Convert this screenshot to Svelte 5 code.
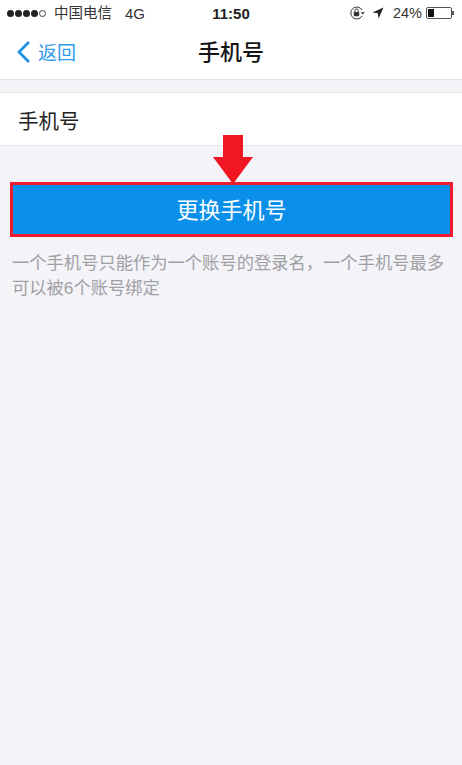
<script>
  const tip = '一个手机号只能作为一个账号的登录名，一个手机号最多可以被6个账号绑定';
</script>

<div class="screen">
  <header class="top">
    <div class="status">
      <div class="status-left">
        <span class="signal">
          <i></i><i></i><i></i><i></i><i class="off"></i>
        </span>
        <span class="carrier">中国电信</span>
        <span class="net">4G</span>
      </div>
      <span class="time">11:50</span>
      <div class="status-right">
        <svg class="lock" width="16" height="16" viewBox="0 0 16 16" fill="none">
          <path d="M13 11A6 6 0 1 1 13 5" stroke="#333" stroke-width="1" />
          <path d="M11.6 7.2h4.2l-2.1 2.4z" fill="#333" />
          <rect x="4.8" y="7" width="5.4" height="4.2" rx=".6" fill="#333" />
          <path d="M5.9 7V5.6a1.6 1.6 0 0 1 3.2 0V7" stroke="#333" stroke-width="1" />
        </svg>
        <svg class="loc" width="12" height="12" viewBox="0 0 12 12">
          <path d="M11.5 .5 L.5 5.4 L5.8 6.2 L6.6 11.5z" fill="#222" />
        </svg>
        <span class="pct">24%</span>
        <span class="battery"><span class="level"></span></span>
        <span class="nub"></span>
      </div>
    </div>
    <nav class="nav">
      <a class="back" href="#back">
        <svg width="15" height="24" viewBox="0 0 15 24" fill="none">
          <path d="M13 2 L3 12 L13 22" stroke="#1a8fe8" stroke-width="2.7" />
        </svg>
        <span>返回</span>
      </a>
      <h1>手机号</h1>
    </nav>
  </header>

  <div class="row">手机号</div>

  <div class="action">
    <button class="change">更换手机号</button>
    <svg class="arrow" width="40" height="50" viewBox="0 0 40 50">
      <path d="M10 0H30V22H40L20 49L0 22H10z" fill="#f01622" />
    </svg>
  </div>

  <p class="tip">{tip}</p>
</div>

<style>
  :global(body) {
    margin: 0;
    background: #f3f3f8;
  }

  .screen {
    width: 462px;
    height: 765px;
    overflow: hidden;
    background: #f3f3f8;
    font-family: "Liberation Sans", "Noto Sans CJK SC", sans-serif;
  }

  .top {
    height: 79px;
    background: #fff;
    border-bottom: 1px solid #e4e4e8;
  }

  .status {
    height: 26px;
    padding: 0 8px 0 7px;
    display: flex;
    align-items: center;
    justify-content: space-between;
    position: relative;
    color: #333;
    font-size: 14.5px;
  }

  .status-left,
  .status-right {
    display: flex;
    align-items: center;
  }

  .signal {
    display: flex;
    gap: 1px;
    margin-right: 8px;
  }

  .signal i {
    width: 7px;
    height: 7px;
    border-radius: 50%;
    background: #222;
  }

  .signal i.off {
    box-sizing: border-box;
    background: none;
    border: 1px solid #444;
  }

  .carrier {
    padding-bottom: 3px;
  }

  .net {
    margin-left: 13px;
    font-size: 15px;
  }

  .time {
    position: absolute;
    left: 0;
    right: 0;
    text-align: center;
    font-weight: bold;
    font-size: 15px;
    color: #222;
  }

  .lock {
    margin-right: 7px;
  }

  .loc {
    margin-right: 9px;
  }

  .pct {
    margin-right: 4px;
  }

  .battery {
    box-sizing: border-box;
    width: 26px;
    height: 12px;
    padding: 1px;
    border: 1px solid #555;
    border-radius: 2px;
    display: flex;
  }

  .level {
    width: 6px;
    background: #111;
  }

  .nub {
    width: 2px;
    height: 4px;
    background: #555;
  }

  .nav {
    height: 48px;
    padding-bottom: 5px;
    position: relative;
    display: flex;
    align-items: center;
    justify-content: center;
  }

  .back {
    position: absolute;
    left: 16px;
    top: 12px;
    display: flex;
    align-items: center;
    gap: 7px;
    color: #2f9bec;
    font-size: 19px;
    text-decoration: none;
  }

  .nav h1 {
    margin: 0;
    font-size: 22px;
    font-weight: 500;
    color: #151515;
  }

  .row {
    margin-top: 12px;
    height: 54px;
    padding: 1px 0 0 18px;
    display: flex;
    align-items: center;
    background: #fff;
    border-top: 1px solid #e8e8ec;
    border-bottom: 1px solid #e4e4e8;
    box-sizing: border-box;
    font-size: 20.5px;
    color: #222;
  }

  .action {
    margin: 36px 9px 0 10px;
    position: relative;
  }

  .change {
    display: block;
    box-sizing: border-box;
    width: 100%;
    height: 55px;
    border: 3px solid #ee1c2e;
    background: #0a90ea;
    color: #fff;
    font-family: inherit;
    font-size: 22px;
    padding: 0 0 4px;
  }

  .arrow {
    position: absolute;
    left: 203px;
    top: -47px;
  }

  .tip {
    margin: 14px 12px 0 12px;
    font-size: 17.3px;
    line-height: 25px;
    color: #a0a0a4;
  }
</style>
